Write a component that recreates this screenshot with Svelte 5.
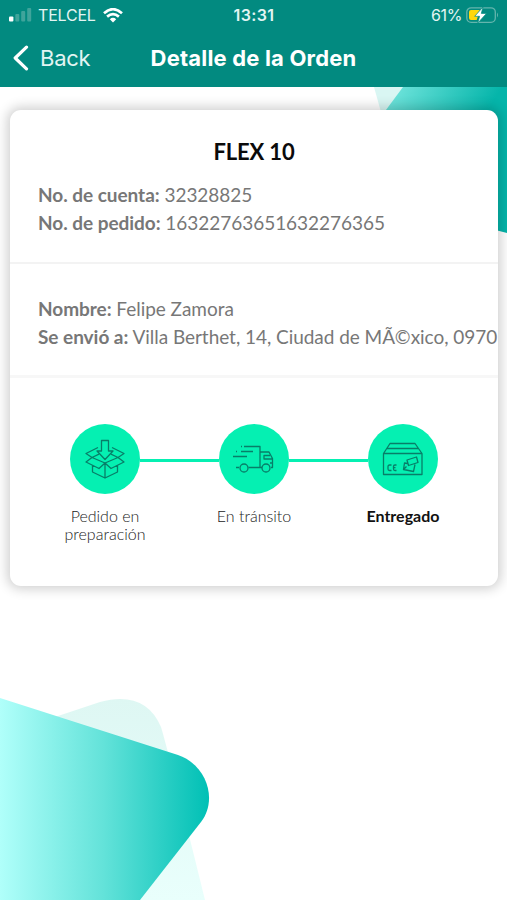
<script lang="ts">
    export let title = "Detalle de la Orden";
    export let product = "FLEX 10";

    const account = [
        { label: "No. de cuenta:", value: "32328825" },
        { label: "No. de pedido:", value: "16322763651632276365" }
    ];
    const shipping = [
        { label: "Nombre:", value: "Felipe Zamora" },
        { label: "Se envió a:", value: "Villa Berthet, 14, Ciudad de MÃ©xico, 0970" }
    ];
    const steps = [
        { icon: "box", label: "Pedido en preparación" },
        { icon: "truck", label: "En tránsito" },
        { icon: "package", label: "Entregado" }
    ];
    let current = 2;
</script>

<div class="screen">
    <svg class="backdrop" viewBox="0 0 507 900" aria-hidden="true">
        <defs>
            <linearGradient id="top" gradientUnits="userSpaceOnUse" x1="385" y1="70" x2="480" y2="125">
                <stop offset="0" stop-color="#82ece4" />
                <stop offset="1" stop-color="#05b5aa" />
            </linearGradient>
            <linearGradient id="bottom" gradientUnits="userSpaceOnUse" x1="0" y1="0" x2="209" y2="0">
                <stop offset="0" stop-color="#b0fffa" />
                <stop offset=".5" stop-color="#62e2d9" />
                <stop offset="1" stop-color="#00c0b5" />
            </linearGradient>
            <linearGradient id="pale" x1="0" y1="0" x2="0" y2="1">
                <stop offset="0" stop-color="#def7f3" />
                <stop offset="1" stop-color="#e9fffc" />
            </linearGradient>
        </defs>
        <path d="M374 87H420V130H386Z" fill="#d9f6f3" />
        <path d="M403 87H507V233L380 200V118Z" fill="url(#top)" />
        <path d="M40 722L100 702Q145 690 161 727Q168 750 205 900H100Z" fill="url(#pale)" />
        <path d="M0 698L178 755C207 765 218 800 201 822L140 900H0Z" fill="url(#bottom)" />
    </svg>

    <header>
        <div class="status">
            <div class="carrier">
                <svg width="23" height="14" viewBox="0 0 23 14">
                    <rect x="0" y="8.5" width="4.4" height="5" rx="1" fill="#fff" />
                    <g fill="#3fa49b">
                        <rect x="6.3" y="6" width="4" height="7.5" rx="1" />
                        <rect x="12.2" y="3" width="4" height="10.5" rx="1" />
                        <rect x="18.2" y="0" width="4" height="13.5" rx="1" />
                    </g>
                </svg>
                <span>TELCEL</span>
                <svg class="wifi" width="20" height="15" viewBox="0 0 20 15" fill="none" stroke="#fff" stroke-width="2.7">
                    <path d="M1 5.2Q10-2.8 19 5.2M4.1 8.6Q10 3.6 15.9 8.6" />
                    <path d="M6.8 11.2Q10 8.5 13.2 11.2L10 14.5Z" fill="#fff" stroke="none" />
                </svg>
            </div>
            <time>13:31</time>
            <div class="battery">
                <span>61%</span>
                <svg width="33" height="18" viewBox="0 0 33 18">
                    <rect x=".8" y="1.8" width="28.5" height="14.5" rx="4.3" fill="none" stroke="#64b5ad" stroke-width="1.3" />
                    <path d="M31 6.5Q33 9 31 11.5Z" fill="#64b5ad" />
                    <path d="M5 4H14L9.5 10H12L10.7 14H5Q3 14 3 12V6Q3 4 5 4Z" fill="#fdd70d" />
                    <path d="M17 1L8.7 10.3H13.6L11.8 17L20.5 7.4H15.3Z" fill="#fff" stroke="#028a80" stroke-width=".7" />
                </svg>
            </div>
        </div>
        <nav>
            <button class="back">
                <svg width="16" height="26" viewBox="0 0 16 26" fill="none" stroke="#fff" stroke-width="3.2" stroke-linecap="round" stroke-linejoin="round">
                    <path d="M13.5 2.2L2.2 13L13.5 23.8" />
                </svg>
                <span>Back</span>
            </button>
            <h1>{title}</h1>
        </nav>
    </header>

    <main>
        <section class="account">
            <h2>{product}</h2>
            {#each account as row}
                <p><b>{row.label}</b> {row.value}</p>
            {/each}
        </section>
        <section class="shipping">
            {#each shipping as row}
                <p><b>{row.label}</b> {row.value}</p>
            {/each}
        </section>
        <section class="steps">
            {#each steps as step, i}
                <div class="step" class:current={i === current}>
                    <div class="circle">
                        {#if step.icon === "box"}
                            <svg width="42" height="42" viewBox="0 0 42 42">
                                <path d="M17.5 2.5H24.5V13H29L21 21.5L13 13H17.5Z" />
                                <path d="M14 9.5L2 15.5L8 19.5L2 24L15 30.5L21 25L27 30.5L40 24L34 19.5L40 15.5L28 9.5M8 19.5L15 16.2M34 19.5L27 16.2M8 19.5L21 25L34 19.5M8.5 27.5V34L21 40L33.5 34V27.5M21 25V40" />
                            </svg>
                        {:else if step.icon === "truck"}
                            <svg width="42" height="42" viewBox="0 0 42 42">
                                <path d="M11 8.5H27V29.5H15.5M9 8.5H8M8 13.5H20M4 13.5H3M0 18.5H14M3 29.5H6M27 14H36L39.5 20.5V29.5H38M27 29.5H29M37 17.5H31V21H39M39 25H37" />
                                <circle cx="11" cy="30" r="4" />
                                <circle cx="33" cy="30" r="4" />
                            </svg>
                        {:else}
                            <svg width="42" height="42" viewBox="0 0 42 42">
                                <path d="M1.5 15.5L8 5.5H33L40 15.5V36.5H1.5ZM1.5 15.5H40M5 10.5H36.5M9.5 27H7.5Q6 27 6 28.5V31Q6 32.5 7.5 32.5H9.5M14.5 27H13Q11.5 27 11.5 28.5V31Q11.5 32.5 13 32.5H14.5M11.5 29.7H13.5" />
                                <path d="M25 22L34.5 19L36 24.5L26.5 27.5ZM25.5 25.5L22.5 25L21.5 31.5L31.5 33.5L33 26.5M21.5 31.5L24.5 28.5" />
                            </svg>
                        {/if}
                    </div>
                    <span>{step.label}</span>
                </div>
                {#if i < steps.length - 1}
                    <div class="line"></div>
                {/if}
            {/each}
        </section>
    </main>
</div>

<style>
    :global(body) {
        margin: 0;
        background: #fff;
    }
    .screen {
        position: relative;
        height: 900px;
        overflow: hidden;
        font-family: Lato, "Liberation Sans", sans-serif;
    }
    .backdrop {
        position: absolute;
        inset: 0;
        width: 507px;
        height: 900px;
    }
    header {
        position: relative;
        height: 87px;
        color: #fff;
        background: #028a80;
        font-family: Inter, "Liberation Sans", sans-serif;
    }
    .status {
        display: grid;
        grid-template-columns: 1fr auto 1fr;
        align-items: center;
        height: 30px;
        padding: 0 8px 0 9px;
        font-size: 16px;
        line-height: 30px;
        color: #e3f5f3;
    }
    .carrier, .battery {
        display: flex;
        align-items: center;
    }
    .carrier span {
        margin-left: 6px;
        letter-spacing: -.2px;
    }
    .wifi {
        margin-left: 7px;
    }
    time {
        font-weight: 600;
        letter-spacing: .4px;
    }
    .battery {
        justify-content: flex-end;
        gap: 4px;
    }
    .battery span {
        letter-spacing: -.4px;
    }
    nav {
        display: grid;
        grid-template-columns: 1fr auto 1fr;
        align-items: center;
        height: 56px;
        padding: 0 13px;
    }
    .back {
        display: flex;
        align-items: center;
        gap: 11px;
        padding: 0;
        border: 0;
        background: none;
        color: #e3f5f3;
        font: 400 22px Inter, "Liberation Sans", sans-serif;
        letter-spacing: -.25px;
    }
    h1 {
        margin: 0;
        font-size: 22px;
        font-weight: 700;
        letter-spacing: .18px;
    }
    main {
        position: relative;
        height: 476px;
        margin: 23px 9px 0 10px;
        overflow: hidden;
        border-radius: 11px;
        background: #fff;
        box-shadow: 0 0 12px 3px rgba(0, 0, 0, .19);
    }
    h2 {
        margin: 0 0 15px;
        text-align: center;
        font-size: 22px;
        line-height: 28px;
        font-weight: 700;
        letter-spacing: -.15px;
        color: #0b0b0b;
    }
    section {
        box-sizing: border-box;
    }
    .account {
        height: 154px;
        padding: 28px 28px 0;
        border-bottom: 2px solid #f3f3f3;
    }
    .shipping {
        height: 114px;
        padding: 31px 28px 0;
        border-bottom: 3px solid #f7f7f7;
    }
    p {
        margin: 0;
        font-size: 19px;
        line-height: 28px;
        letter-spacing: -.04px;
        color: #777;
        white-space: nowrap;
    }
    .steps {
        display: flex;
        justify-content: center;
        padding-top: 46px;
    }
    .step {
        display: flex;
        flex-direction: column;
        align-items: center;
        width: 70px;
    }
    .circle {
        display: flex;
        align-items: center;
        justify-content: center;
        width: 70px;
        height: 70px;
        border-radius: 50%;
        background: #05f0b2;
    }
    .circle svg {
        fill: none;
        stroke: #087e68;
        stroke-width: 1.3;
        stroke-linejoin: round;
    }
    .step span {
        width: 90px;
        margin-top: 13px;
        text-align: center;
        font-size: 16px;
        line-height: 18px;
        font-weight: 300;
        color: #222;
    }
    .step.current span {
        font-weight: 700;
        color: #111;
    }
    .line {
        width: 79px;
        height: 3px;
        margin-top: 35px;
        background: #05f0b2;
    }
</style>
